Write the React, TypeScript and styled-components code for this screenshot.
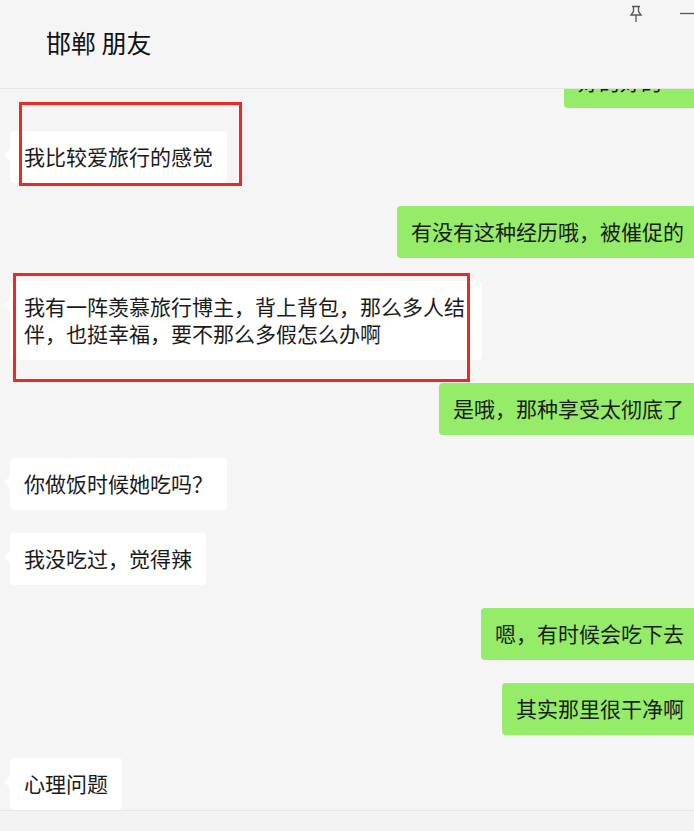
import React from 'react';
import styled, { createGlobalStyle } from 'styled-components';

const GlobalStyle = createGlobalStyle`
  html, body {
    margin: 0;
    padding: 0;
    background: #f5f5f5;
    overflow: hidden;
  }
  * {
    box-sizing: border-box;
  }
`;

const Window = styled.div`
  position: relative;
  width: 694px;
  height: 831px;
  display: flex;
  flex-direction: column;
  background: #f5f5f5;
  overflow: hidden;
  font-family: 'Noto Sans CJK SC', 'Noto Sans', sans-serif;
  color: #1a1a1a;
`;

const Header = styled.header`
  position: relative;
  height: 89px;
  flex-shrink: 0;
  display: flex;
  align-items: flex-start;
  padding: 25px 0 0 46px;
  border-bottom: 1px solid #e4e4e4;
  background: #f5f5f5;
  z-index: 2;
`;

const Title = styled.h1`
  margin: 0;
  font-size: 25px;
  font-weight: 400;
  line-height: 34px;
  color: #111;
`;

const WindowControls = styled.div`
  position: absolute;
  top: 4px;
  right: 0;
  display: flex;
  align-items: center;
  gap: 34px;
  color: #444;
`;

const Messages = styled.main`
  flex: 1;
  display: flex;
  flex-direction: column;
  gap: 23px;
  padding: 0 0 0 10px;
  overflow: hidden;
`;

const Row = styled.div<{ $mine?: boolean }>`
  display: flex;
  justify-content: ${(p) => (p.$mine ? 'flex-end' : 'flex-start')};
`;

const Bubble = styled.div<{ $mine?: boolean; $wide?: boolean }>`
  position: relative;
  max-width: 472px;
  padding: 12px 14px 13px;
  font-size: 21px;
  line-height: 27px;
  border-radius: 4px;
  background: ${(p) => (p.$mine ? '#95ec69' : '#ffffff')};
  margin-right: ${(p) => (p.$mine ? '-4px' : '0')};
  white-space: ${(p) => (p.$wide ? 'normal' : 'nowrap')};

  &::before {
    content: '';
    position: absolute;
    top: 18px;
    ${(p) => (p.$mine ? 'right: -6px;' : 'left: -6px;')}
    border-top: 6px solid transparent;
    border-bottom: 6px solid transparent;
    ${(p) => (p.$mine ? 'border-left: 6px solid #95ec69;' : 'border-right: 6px solid #ffffff;')}
  }
`;

const CutBubble = styled(Bubble)`
  margin-top: -33px;
  width: 134px;
`;

const Mark = styled.div`
  position: absolute;
  border: 3px solid #ea2a24;
  pointer-events: none;
  z-index: 3;
`;

const Footer = styled.footer`
  height: 21px;
  flex-shrink: 0;
  border-top: 1px solid #e6e6e6;
  background: #f3f3f3;
`;

const PinIcon = () => (
  <svg width="16" height="20" viewBox="0 0 16 20" fill="none" stroke="#555" strokeWidth="1.3">
    <path d="M4 2.5h8M5.5 2.5v5L3 11h10l-2.5-3.5v-5M8 11v7" />
  </svg>
);

const MinIcon = () => (
  <svg width="16" height="20" viewBox="0 0 16 20" fill="none" stroke="#555" strokeWidth="1.3">
    <path d="M2 9.5h14" />
  </svg>
);

function App(): JSX.Element {
  return (
    <>
      <GlobalStyle />
      <Window>
        <Header>
          <Title>邯郸 朋友</Title>
          <WindowControls>
            <PinIcon />
            <MinIcon />
          </WindowControls>
        </Header>
        <Messages>
          <Row $mine>
            <CutBubble $mine>好的好的</CutBubble>
          </Row>
          <Row>
            <Bubble>我比较爱旅行的感觉</Bubble>
          </Row>
          <Row $mine>
            <Bubble $mine>有没有这种经历哦，被催促的</Bubble>
          </Row>
          <Row>
            <Bubble $wide>
              我有一阵羡慕旅行博主，背上背包，那么多人结伴，也挺幸福，要不那么多假怎么办啊
            </Bubble>
          </Row>
          <Row $mine>
            <Bubble $mine>是哦，那种享受太彻底了</Bubble>
          </Row>
          <Row>
            <Bubble>你做饭时候她吃吗？</Bubble>
          </Row>
          <Row>
            <Bubble>我没吃过，觉得辣</Bubble>
          </Row>
          <Row $mine>
            <Bubble $mine>嗯，有时候会吃下去</Bubble>
          </Row>
          <Row $mine>
            <Bubble $mine>其实那里很干净啊</Bubble>
          </Row>
          <Row>
            <Bubble>心理问题</Bubble>
          </Row>
        </Messages>
        <Footer />
        <Mark style={{ left: 19, top: 102, width: 223, height: 84 }} />
        <Mark style={{ left: 13, top: 273, width: 457, height: 109 }} />
      </Window>
    </>
  );
}

export default App;
